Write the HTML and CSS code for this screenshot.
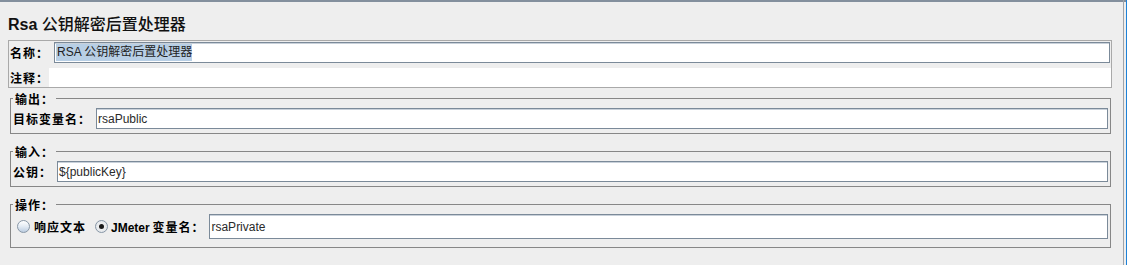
FILE: index.html
```html
<!DOCTYPE html>
<html lang="zh-CN">
<head>
<meta charset="utf-8">
<title>Rsa 公钥解密后置处理器</title>
<link rel="stylesheet" href="styles.css">
</head>
<body>
<div class="window">
  <div class="content">
    <div class="topbar"></div>
    <h1 class="title"><span class="latin">Rsa</span> <span class="cjk">公钥解密后置处理器</span></h1>

    <div class="panel">
      <div class="row name-row">
        <label class="lbl">名称：</label>
        <div class="field name-field"><span class="sel">RSA 公钥解密后置处理器</span></div>
      </div>
      <div class="row comment-row">
        <label class="lbl lbl-tight">注释：</label>
        <div class="area"></div>
      </div>
    </div>

    <fieldset class="group group-first">
      <legend class="legend">输出：</legend>
      <div class="row">
        <label class="lbl">目标变量名：</label>
        <div class="field">rsaPublic</div>
      </div>
    </fieldset>

    <fieldset class="group">
      <legend class="legend">输入：</legend>
      <div class="row">
        <label class="lbl">公钥：</label>
        <div class="field">${publicKey}</div>
      </div>
    </fieldset>

    <fieldset class="group group-op">
      <legend class="legend">操作：</legend>
      <div class="row op-row">
        <span class="radio"></span>
        <span class="opt-text">响应文本</span>
        <span class="radio checked"></span>
        <span class="opt-text opt-jm"><span class="latin-b">JMeter</span> <span class="cjk-b">变量名：</span></span>
        <div class="field tall">rsaPrivate</div>
      </div>
    </fieldset>
  </div>
  <div class="edge"></div>
  <div class="edge-gap"></div>
  <div class="edge-blue"></div>
</div>
</body>
</html>
```

FILE: styles.css
```css
html, body {
  margin: 0;
  padding: 0;
  background: #eeeeee;
}

body {
  font-family: "Liberation Sans", "Noto Sans CJK SC", sans-serif;
  font-size: 12px;
  color: #000;
}

.window {
  display: flex;
  width: 1127px;
  height: 265px;
  overflow: hidden;
}

.content {
  width: 1123px;
  flex: none;
}

.topbar {
  height: 2px;
  background: #838f9d;
  margin-right: -1px;
}

.edge {
  width: 1px;
  background: #a0a4aa;
  flex: none;
}

.edge-gap {
  flex: none;
  background: #eeeeee;
  border-top: 2px solid #838f9d;
  box-sizing: border-box;
  width: 2px;
}

.edge-blue {
  width: 1px;
  flex: none;
  background: #1e82d8;
}

.title {
  margin: 0 0 7px 8px;
  padding-top: 11px;
  height: 20px;
  line-height: 20px;
  font-size: 16px;
  font-weight: normal;
  color: #111;
  white-space: nowrap;
}

.title .latin {
  font-weight: bold;
  font-family: "Liberation Sans", sans-serif;
}

.title .cjk {
  font-family: "Noto Sans CJK SC", sans-serif;
  font-weight: 500;
}

.panel {
  margin-left: 8px;
  width: 1104px;
  height: 48px;
  box-sizing: border-box;
  border: 1px solid #a9a9a9;
  padding: 1px 0 0 1px;
}

.row {
  display: flex;
  align-items: center;
  height: 21px;
}

.lbl {
  font-family: "Noto Sans CJK SC", sans-serif;
  font-weight: bold;
  font-size: 12px;
  letter-spacing: 1px;
  line-height: 14px;
  margin-right: 5px;
  white-space: nowrap;
  flex: none;
}

.lbl-tight {
  margin-right: 0;
}

.field {
  flex: 1;
  height: 21px;
  box-sizing: border-box;
  border: 1px solid #7b8a99;
  box-shadow: inset 0 1px 0 #c9d1da;
  background: #fff;
  display: flex;
  align-items: center;
  padding-left: 1px;
  color: #2a2a2a;
  font-size: 12px;
  font-family: "Liberation Sans", "Noto Sans CJK SC", sans-serif;
  white-space: nowrap;
}

.name-field {
  margin-right: 1px;
}

.sel {
  background: #b8cfe5;
  line-height: 17px;
  padding-left: 1px;
  color: #222;
}

.comment-row {
  margin-top: 5px;
  height: 19px;
}

.area {
  flex: 1;
  height: 19px;
  background: #fff;
}

.group {
  margin: 11px 12px 0 10px;
  padding: 3px 2px 4px 2px;
  border: 1px solid #878787;
  min-inline-size: auto;
}

.group-first {
  margin-top: 4px;
}

.legend {
  padding: 0 2px;
  margin: 0;
  font-family: "Noto Sans CJK SC", sans-serif;
  font-weight: bold;
  font-size: 12px;
  letter-spacing: 1px;
  line-height: 13px;
  height: 13px;
}

.group-op {
  padding-bottom: 8px;
}

.op-row {
  height: 25px;
}

.field.tall {
  height: 25px;
}

.radio {
  flex: none;
  width: 13px;
  height: 13px;
  box-sizing: border-box;
  border-radius: 50%;
  border: 1px solid #8796a6;
  background: linear-gradient(#ffffff 0%, #e6edf5 45%, #bccde0 100%);
  margin-left: 4px;
  position: relative;
}

.radio.checked {
  margin-left: 9px;
  background: radial-gradient(circle, #f4f4f4 0%, #dfe3e8 100%);
}

.radio.checked::after {
  content: "";
  position: absolute;
  left: 3px;
  top: 3px;
  width: 5px;
  height: 5px;
  border-radius: 50%;
  background: #1a1a1a;
}

.opt-text {
  margin-left: 4px;
  font-family: "Noto Sans CJK SC", sans-serif;
  font-weight: bold;
  font-size: 12px;
  letter-spacing: 1px;
  white-space: nowrap;
  flex: none;
}

.opt-jm {
  margin-left: 3px;
  margin-right: 5px;
  letter-spacing: 0;
}

.latin-b {
  font-family: "Liberation Sans", sans-serif;
  font-weight: bold;
}

.cjk-b {
  letter-spacing: 1px;
}
```
